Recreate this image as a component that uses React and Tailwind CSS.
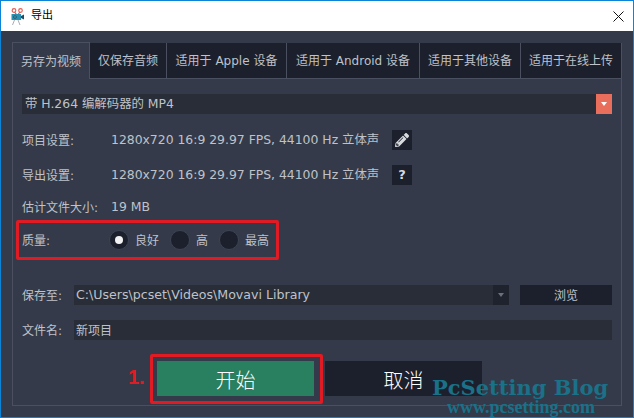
import { FaPencilAlt } from "react-icons/fa";

const tabs = [
  { label: "仅保存音频", w: "w-[77px]" },
  { label: "适用于 Apple 设备", w: "w-[120px]" },
  { label: "适用于 Android 设备", w: "w-[133px]" },
  { label: "适用于其他设备", w: "w-[101px]" },
  { label: "适用于在线上传", w: "w-[101px]" },
];

function Logo() {
  return (
    <svg width="13" height="17" viewBox="0 0 13 17" className="mr-[7px] shrink-0">
      <circle cx="3" cy="2.5" r="1.8" fill="none" stroke="#e0645c" strokeWidth="1.2" />
      <circle cx="9.5" cy="2.5" r="1.8" fill="none" stroke="#e0645c" strokeWidth="1.2" />
      <path d="M3.5 4l2 2.5M9 4L7 6.5" stroke="#d9534f" strokeWidth="1.2" fill="none" />
      <rect x="0.5" y="6" width="9.5" height="6" fill="#2b8fb0" />
      <path d="M10 8l3-1.5v5L10 10z" fill="#1c4f66" />
      <circle cx="4" cy="9" r="1.6" fill="#123f52" />
      <circle cx="4" cy="9" r="0.7" fill="#9fe0f0" />
      <path d="M3.5 12l-2 5M7 12l2 5" stroke="#a9adb6" strokeWidth="1" fill="none" />
    </svg>
  );
}

function Radio({ label, checked, textW }) {
  return (
    <div className={`flex items-center ${textW}`}>
      <div className="w-[20px] h-[20px] rounded-full bg-[#1c202c] border border-[#3d4353] flex items-center justify-center">
        {checked && <div className="w-[8px] h-[8px] rounded-full bg-[#f2f2f2]"></div>}
      </div>
      <span className="ml-[6px] pt-[1px]">{label}</span>
    </div>
  );
}

function InfoRow({ label, value, children, className }) {
  return (
    <div className={`flex items-center h-[20px] ${className}`}>
      <span className="w-[89px] shrink-0 pt-[1px]">{label}</span>
      <span className="w-[281px] shrink-0 whitespace-nowrap pt-[1px] text-[12.4px]">{value}</span>
      {children}
    </div>
  );
}

export default function App() {
  return (
    <div
      className="w-[634px] h-[418px] border border-[#0b84d8] flex flex-col overflow-hidden relative text-[12px] text-[#bfc2c9]"
      style={{ fontFamily: '"DejaVu Sans", "Noto Sans CJK SC", sans-serif' }}
    >
      <div className="h-[30px] shrink-0 bg-white flex items-center pl-[10px] pr-[9px] text-black">
        <Logo />
        <span className="text-[11px] pt-[1px]">导出</span>
        <svg width="11" height="11" viewBox="0 0 11 11" className="ml-auto">
          <path d="M0.5 0.5l10 10M10.5 0.5l-10 10" stroke="#111" strokeWidth="1" fill="none" />
        </svg>
      </div>

      <div className="flex-1 bg-[#343a49] pt-[11px] px-[11px] pb-[11px] flex flex-col">
        <div className="flex h-[37px] shrink-0">
          <div className="w-[78px] pt-[1px] border border-b-0 border-[#4a5060] flex items-center justify-center whitespace-nowrap">
            另存为视频
          </div>
          {tabs.map((t) => (
            <div
              key={t.label}
              className={`${t.w} mt-[1px] pt-[1px] bg-[#1c202c] border-r border-b border-[#4a5060] flex items-center justify-center whitespace-nowrap`}
            >
              {t.label}
            </div>
          ))}
        </div>

        <div className="flex-1 border border-t-0 border-[#4a5060] pt-[15px] px-[9px] flex flex-col">
          <div className="h-[20px] bg-[#282d38] flex items-center pl-[3px]">
            <span className="pt-[1px] text-[12.4px]">带 H.264 编解码器的 MP4</span>
            <div className="ml-auto w-[16px] h-[20px] bg-[#e96e5b] flex items-center justify-center">
              <svg width="6" height="4" viewBox="0 0 6 4">
                <path d="M0 0h6L3 4z" fill="#fff" />
              </svg>
            </div>
          </div>

          <InfoRow label="项目设置:" value="1280x720 16:9 29.97 FPS, 44100 Hz 立体声" className="mt-[16px]">
            <div className="w-[20px] h-[20px] bg-[#1c202c] flex items-center justify-center">
              <FaPencilAlt size={14} color="#d8dade" />
            </div>
          </InfoRow>
          <InfoRow label="导出设置:" value="1280x720 16:9 29.97 FPS, 44100 Hz 立体声" className="mt-[15px]">
            <div className="w-[20px] h-[20px] bg-[#1c202c] flex items-center justify-center font-bold text-[13px] text-[#d8dade]">
              ?
            </div>
          </InfoRow>
          <InfoRow label="估计文件大小:" value="19 MB" className="mt-[12px]" />

          <div className="flex items-center h-[20px] mt-[13px]">
            <span className="w-[87px] shrink-0 pt-[1px]">质量:</span>
            <Radio label="良好" checked textW="w-[61px]" />
            <Radio label="高" textW="w-[49px]" />
            <Radio label="最高" />
          </div>

          <div className="flex items-center h-[20px] mt-[35px]">
            <span className="w-[52px] shrink-0 pt-[1px]">保存至:</span>
            <div className="w-[435px] h-[20px] bg-[#282d38] flex items-center pl-[2px]">
              <span className="pt-[1px] text-[12.6px]">C:\Users\pcset\Videos\Movavi Library</span>
              <div className="ml-auto w-[16px] h-[20px] bg-[#1f232e] flex items-center justify-center">
                <svg width="6" height="4" viewBox="0 0 6 4">
                  <path d="M0 0h6L3 4z" fill="#6c7078" />
                </svg>
              </div>
            </div>
            <div className="ml-[11px] w-[92px] h-[20px] pt-[1px] bg-[#1c202c] flex items-center justify-center">浏览</div>
          </div>

          <div className="flex items-center h-[20px] mt-[15px]">
            <span className="w-[52px] shrink-0 pt-[1px]">文件名:</span>
            <div className="flex-1 h-[20px] pt-[1px] bg-[#282d38] flex items-center pl-[2px]">新项目</div>
          </div>

          <div className="flex h-[35px] mt-[21px] text-[20px] text-white font-light">
            <div className="ml-[135px] w-[157px] pt-[4px] bg-[#288060] flex items-center justify-center">开始</div>
            <div className="ml-[11px] w-[157px] pt-[4px] bg-[#1c202c] flex items-center justify-center">取消</div>
          </div>
        </div>
      </div>

      {/* annotations on top of the screenshot */}
      <div className="absolute left-[15px] top-[219px] w-[263px] h-[40px] border-[3px] border-[#e01b24] rounded-[2px]"></div>
      <div className="absolute left-[149px] top-[353px] w-[173px] h-[50px] border-[3px] border-[#e01b24] rounded-[2px]"></div>
      <div
        className="absolute left-[127px] top-[361px] text-[20px] font-bold text-[#e01b24]"
        style={{ fontFamily: '"Liberation Sans", sans-serif' }}
      >
        1.
      </div>
      <div
        className="absolute left-[431px] top-[376px] text-[21px] leading-[21px] font-bold text-[#1a7188] whitespace-nowrap"
        style={{ fontFamily: '"DejaVu Serif", serif' }}
      >
        PcSetting Blog
      </div>
      <div
        className="absolute left-[446px] top-[398px] text-[18px] leading-[16px] font-bold text-[#1a7188] whitespace-nowrap"
        style={{ fontFamily: '"Liberation Serif", serif' }}
      >
        www.pcsetting.com
      </div>
    </div>
  );
}
